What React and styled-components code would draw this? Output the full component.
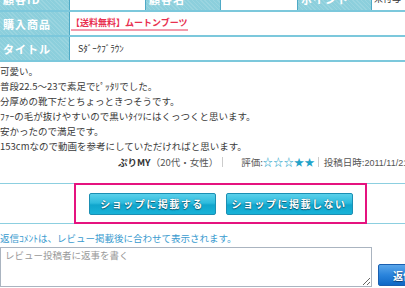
import React from 'react';
import styled, { createGlobalStyle } from 'styled-components';

const GlobalStyle = createGlobalStyle`
  html, body {
    margin: 0;
    padding: 0;
    background: #fff;
    overflow: hidden;
  }
  body {
    font-family: "Noto Sans CJK JP", "Liberation Sans", sans-serif;
    color: #333;
  }
`;

const Page = styled.div`
  width: 460px;
  margin-top: -13px;
`;

const InfoTable = styled.div`
  display: grid;
  grid-template-columns: 70px 1fr;
`;

const Row = styled.div`
  display: grid;
  grid-column: 1 / -1;
  grid-template-columns: ${p => p.cols || '70px 1fr'};
  border-bottom: 2px solid #7cc8dc;
`;

const Label = styled.div`
  height: 23px;
  display: flex;
  align-items: center;
  padding-left: 3px;
  font-size: 11px;
  font-weight: bold;
  letter-spacing: 1px;
  color: #fff;
  background-color: #8ccfdc;
  background-image: repeating-linear-gradient(45deg, rgba(255,255,255,0.12) 0 1px, transparent 1px 3px);
  border-right: 1px solid #4ea9c6;
  border-left: ${p => (p.first ? 'none' : '1px solid #4ea9c6')};
`;

const Value = styled.div`
  height: 23px;
  display: flex;
  align-items: center;
  padding-left: ${p => p.pad || 6}px;
  font-size: 9px;
  color: #333;
  background: #fff;
`;

const ProductLink = styled.a`
  color: #e8304f;
  font-weight: bold;
  font-size: 9px;
  text-decoration: none;
  border-bottom: 2px solid #f39aab;
  line-height: 12px;
`;

const Review = styled.div`
  padding-top: 2px;
  font-size: 9.5px;
  line-height: 15px;
  color: #3a3a3a;
`;

const Meta = styled.div`
  padding-left: 118px;
  font-size: 9.5px;
  line-height: 16px;
  color: #555;
  white-space: nowrap;
`;

const Name = styled.span`
  font-weight: bold;
  color: #333;
`;

const Profile = styled.span`
  font-size: 9.5px;
`;

const Sep = styled.span`
  display: inline-block;
  width: 1px;
  height: 10px;
  vertical-align: -1px;
  background: #ccc;
  margin: 0 ${p => p.right}px 0 ${p => p.left}px;
`;

const Stars = styled.span`
  color: #23a3c9;
  font-size: 10px;
  letter-spacing: 0.4px;
`;

const DateText = styled.span`
  font-family: "Liberation Sans", sans-serif;
  font-size: 9px;
`;

const ActionArea = styled.div`
  margin-top: 12px;
  border-top: 1px solid #8ccfe0;
  border-bottom: 1px solid #8ccfe0;
  height: 39px;
  display: flex;
`;

const Highlight = styled.div`
  margin: -1px 0 -1px 74px;
  width: 289px;
  border: 2px solid #e5137f;
  display: flex;
  align-items: center;
  justify-content: center;
  gap: 10px;
`;

const ShopButton = styled.button`
  width: 127px;
  height: 22px;
  padding: 0;
  border: 1px solid #1b8fb3;
  border-radius: 2px;
  background: linear-gradient(#5ad0ea 0%, #2dbbdd 45%, #10a5cc 55%, #18b3d8 100%);
  color: #fff;
  font-family: inherit;
  font-size: 10px;
  font-weight: bold;
  letter-spacing: 1.5px;
  text-shadow: 0 0 1px #075a74, 0 1px 1px #075a74;
`;

const Note = styled.div`
  margin-top: 7px;
  font-size: 9.5px;
  color: #3a9bcf;
  line-height: 14px;
`;

const ReplyRow = styled.div`
  display: flex;
  align-items: flex-end;
  gap: 6px;
  margin-top: 2px;
`;

const ReplyBox = styled.textarea`
  width: 372px;
  height: 40px;
  box-sizing: border-box;
  margin: 0;
  padding: 0 4px;
  border: 1px solid #aab4c0;
  font-family: inherit;
  font-size: 9.5px;
  color: #333;
  resize: both;
  &::placeholder {
    color: #999;
  }
`;

const ReplyButton = styled.button`
  width: 70px;
  height: 22px;
  margin-bottom: 1px;
  padding: 0 0 0 14px;
  text-align: left;
  border: 1px solid #1a5fb0;
  border-radius: 2px;
  background: linear-gradient(#5aa6ea 0%, #2a84dc 50%, #0f68c6 100%);
  color: #fff;
  font-family: inherit;
  font-size: 10px;
  font-weight: bold;
  text-shadow: 0 1px 1px #0a3a70;
`;

export default function App() {
  return (
    <>
      <GlobalStyle />
      <Page>
        <InfoTable>
          <Row cols="70px 75px 76px 76px 75px 1fr">
            <Label first>顧客ID</Label>
            <Value />
            <Label>顧客名</Label>
            <Value />
            <Label>ポイント</Label>
            <Value pad={2}>未付与</Value>
          </Row>
          <Row>
            <Label first>購入商品</Label>
            <Value pad={1}>
              <ProductLink href="#">【送料無料】ムートンブーツ</ProductLink>
            </Value>
          </Row>
          <Row>
            <Label first>タイトル</Label>
            <Value pad={8}>Sﾀﾞｰｸﾌﾞﾗｳﾝ</Value>
          </Row>
        </InfoTable>
        <Review>
          可愛い。<br />
          普段22.5～23で素足でﾋﾟｯﾀﾘでした。<br />
          分厚めの靴下だとちょっときつそうです。<br />
          ﾌｧｰの毛が抜けやすいので黒いﾀｲﾂにはくっつくと思います。<br />
          安かったので満足です。<br />
          153cmなので動画を参考にしていただければと思います。
        </Review>
        <Meta>
          <Name>ぷりMY</Name><Profile>（20代・女性）</Profile>
          <Sep left={4} right={18} />
          評価:<Stars>☆☆☆★★</Stars>
          <Sep left={3} right={5} />
          投稿日時:<DateText>2011/11/21 10:20</DateText>
        </Meta>
        <ActionArea>
          <Highlight>
            <ShopButton>ショップに掲載する</ShopButton>
            <ShopButton>ショップに掲載しない</ShopButton>
          </Highlight>
        </ActionArea>
        <Note>返信ｺﾒﾝﾄは、レビュー掲載後に合わせて表示されます。</Note>
        <ReplyRow>
          <ReplyBox placeholder="レビュー投稿者に返事を書く" />
          <ReplyButton>返信する</ReplyButton>
        </ReplyRow>
      </Page>
    </>
  );
}
